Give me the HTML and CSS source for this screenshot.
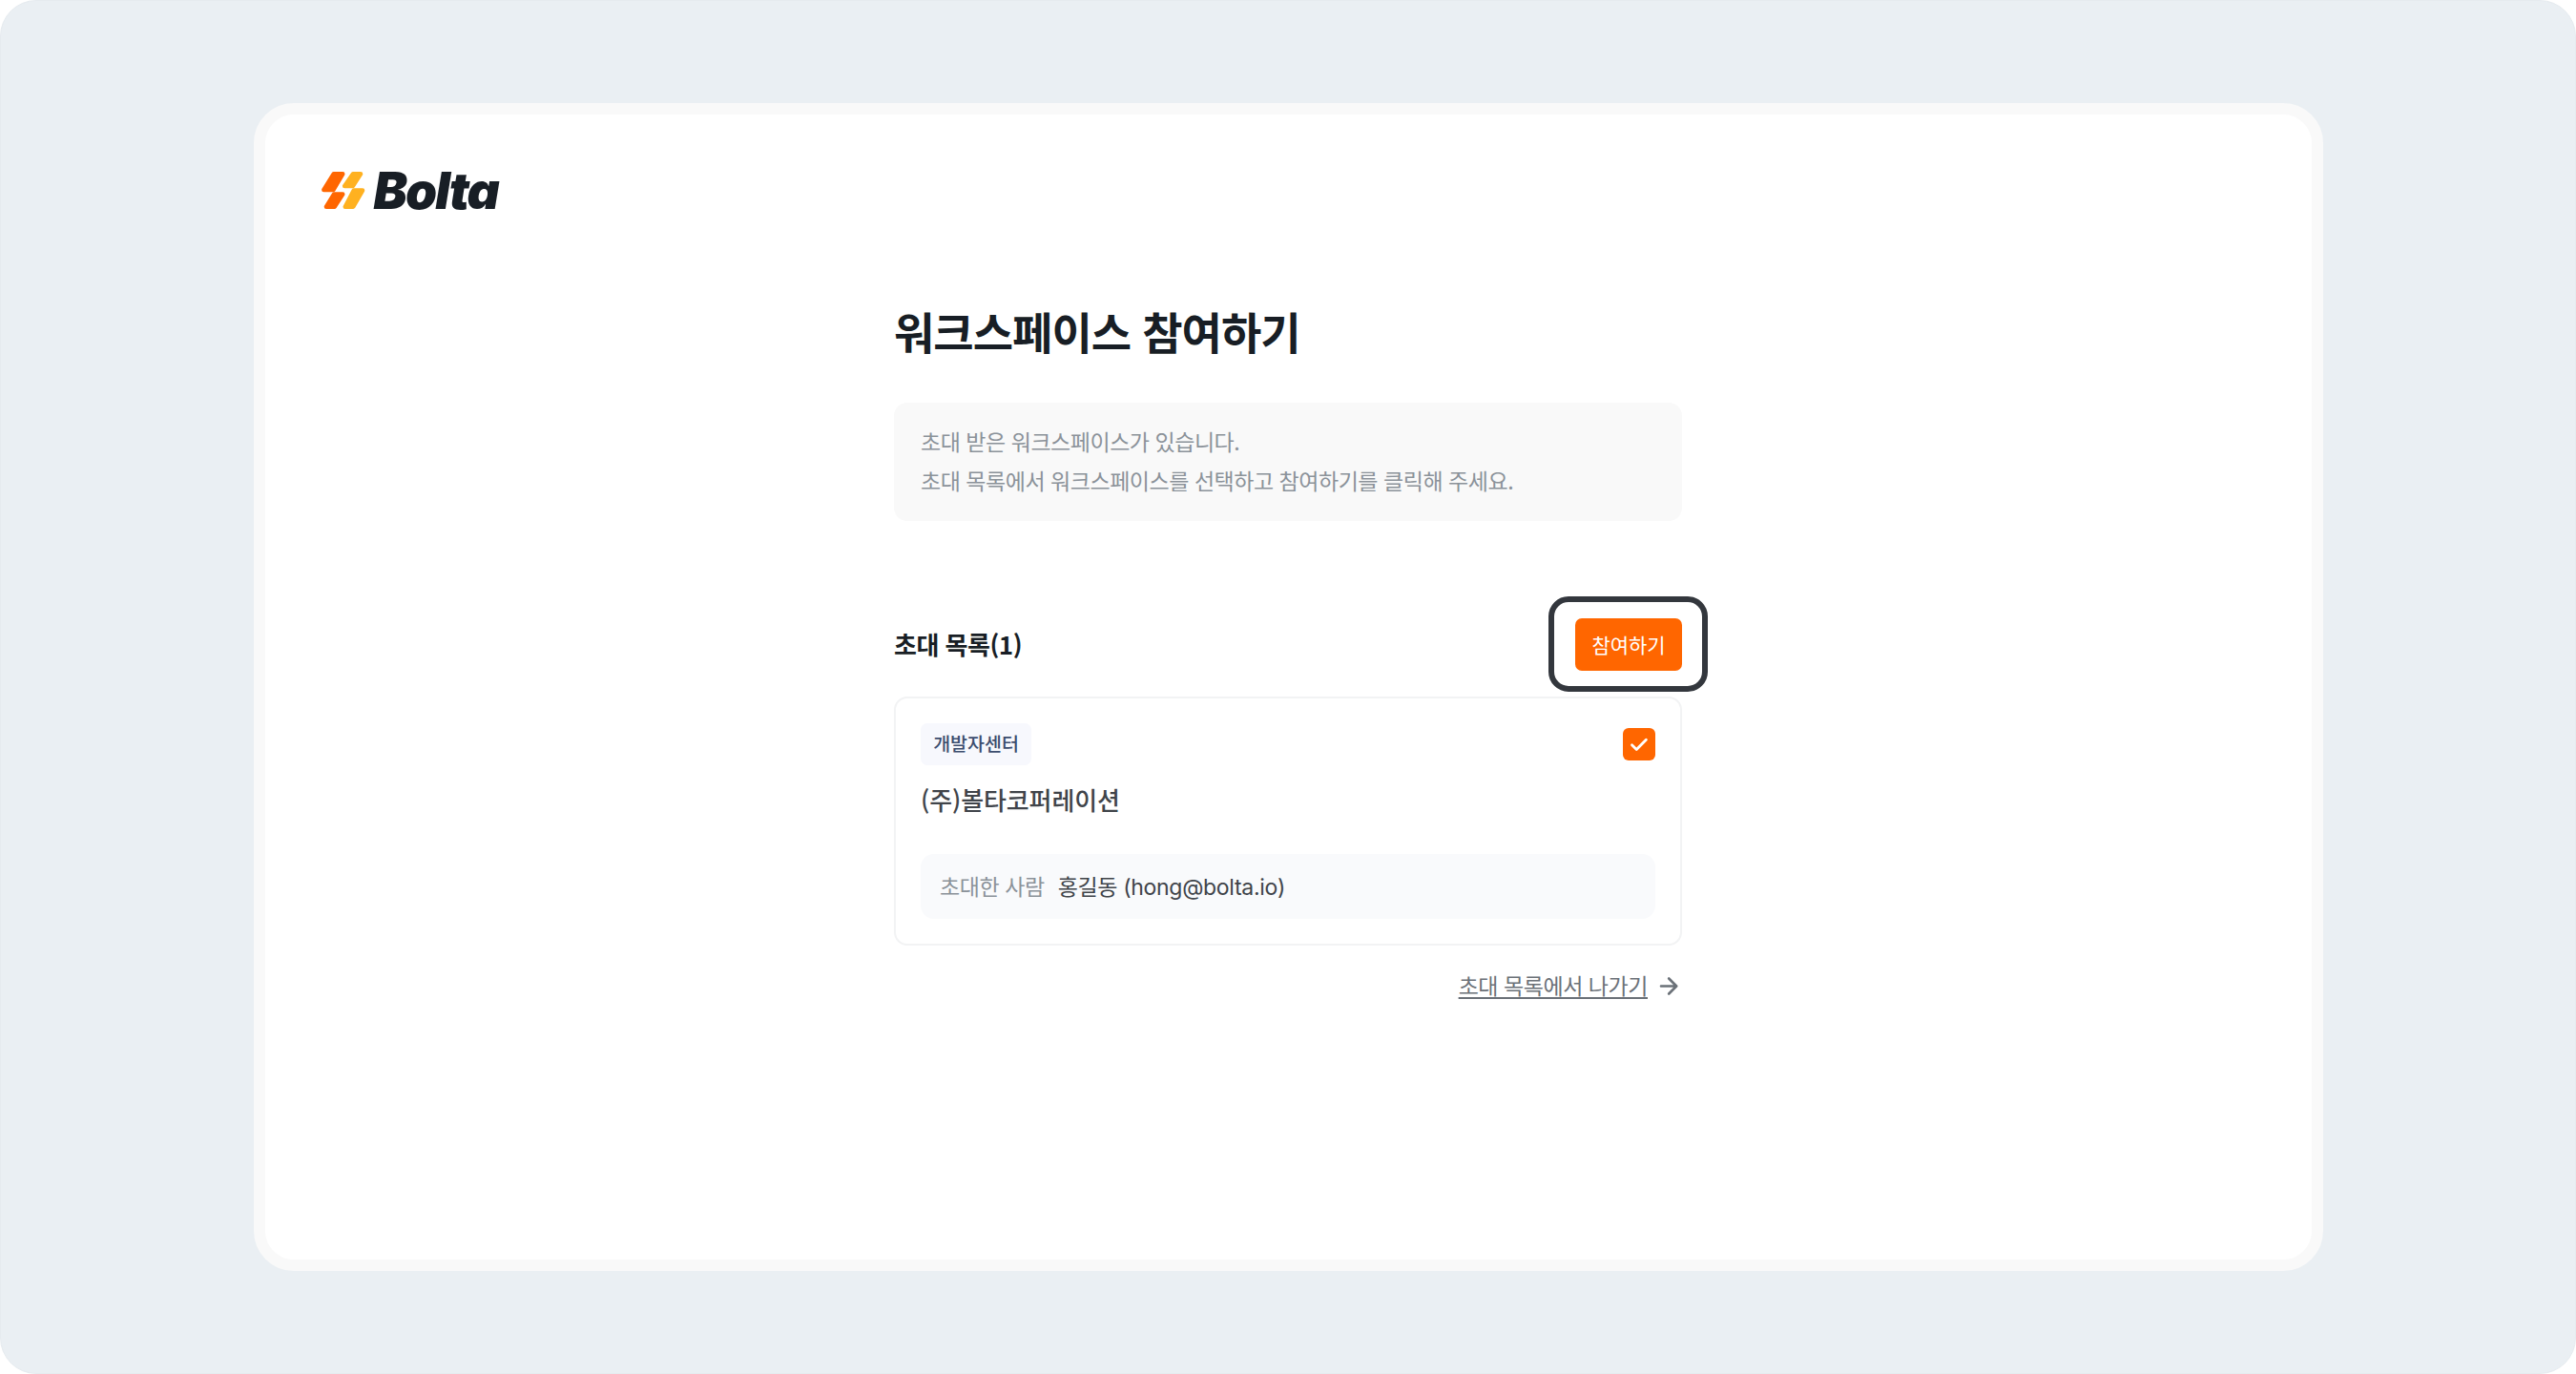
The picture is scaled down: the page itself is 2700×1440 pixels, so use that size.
FILE: index.html
```html
<!DOCTYPE html>
<html lang="ko">
<head>
  <meta charset="UTF-8" />
  <meta name="viewport" content="width=device-width, initial-scale=1.0"/>
  <title>Bolta | 워크스페이스 참여하기</title>
  <link rel="stylesheet" href="styles.css">
</head>
<body>

  <div class="page">
    <div class="window">

      <div class="logo">
        <svg class="logo-mark" width="46" height="40" viewBox="0 0 46 40">
          <g fill="#ff6600" stroke="#ff6600" stroke-width="4.6" stroke-linejoin="round">
            <path d="M12.8 2.3H22.2L12.3 19H2.4Z"/>
            <path d="M13 23.6H22.2L13.6 36.7H5Z"/>
          </g>
          <g fill="#ffb120" stroke="#ffb120" stroke-width="4.6" stroke-linejoin="round">
            <path d="M33 2.3H41L32.8 15H24.2Z"/>
            <path d="M33.8 19.6H43L33.2 36.7H24.8Z"/>
          </g>
        </svg>
        <span class="logo-text">Bolta</span>
      </div>

      <main class="content">
        <h1 class="title">워크스페이스 참여하기</h1>

        <div class="notice">
          <p>초대 받은 워크스페이스가 있습니다.</p>
          <p>초대 목록에서 워크스페이스를 선택하고 참여하기를 클릭해 주세요.</p>
        </div>

        <div class="list-header">
          <h2 class="list-title">초대 목록(1)</h2>
          <div class="join">
            <button class="join-btn" type="button">참여하기</button>
          </div>
        </div>

        <div class="invite">
          <div class="invite-top">
            <span class="badge">개발자센터</span>
            <span class="checkbox">
              <svg width="34" height="34" viewBox="0 0 34 34" fill="none" stroke="#fff" stroke-width="2.8" stroke-linecap="round" stroke-linejoin="round">
                <path d="M9.5 17.8L14.3 22.6L24.4 12.2"/>
              </svg>
            </span>
          </div>
          <div class="company">(주)볼타코퍼레이션</div>
          <div class="inviter">
            <span class="label">초대한 사람</span>
            <span class="value">홍길동 <span class="email">(hong@bolta.io)</span></span>
          </div>
        </div>

        <div class="leave">
          <a class="leave-link">초대 목록에서 나가기</a>
          <svg width="20" height="20" viewBox="0 0 20 20" fill="none" stroke="#6b7178" stroke-width="2.6" stroke-linecap="round" stroke-linejoin="round">
            <path d="M2 10.5H18M10.2 2.5L18.2 10.5L10.2 18.5"/>
          </svg>
        </div>
      </main>

    </div>
  </div>

</body>
</html>
```
FILE: styles.css
```css
* {
  box-sizing: border-box;
  margin: 0;
  padding: 0;
}

body {
  font-family: 'Noto Sans CJK KR', sans-serif;
  background: #fff;
  color: #181e25;
}

.page {
  width: 2700px;
  height: 1440px;
  background: #eaeff3;
  border: 1px solid #e6ebef;
  border-radius: 38px;
  padding: 107px 264.5px;
}

.window {
  height: 1224px;
  background: #fff;
  border: 12px solid #f9f9f9;
  border-radius: 42px;
  padding: 60px 59px;
}

.logo {
  display: flex;
  align-items: center;
  gap: 9px;
  height: 40px;
}

.logo-text {
  font-family: 'Inter', sans-serif;
  font-size: 53px;
  font-weight: 900;
  font-style: italic;
  font-feature-settings: "cv11";
  letter-spacing: -1.9px;
  line-height: 38px;
}

.content {
  width: 826px;
  margin: 91px auto 0;
}

.title {
  font-size: 46px;
  font-weight: 700;
  line-height: 70px;
  letter-spacing: -0.95px;
}

.notice {
  margin-top: 41px;
  padding: 20px 28px;
  height: 124px;
  background: #f9f9f9;
  border-radius: 14px;
  color: #8b9299;
  font-size: 23px;
  line-height: 41px;
  letter-spacing: -0.47px;
}

.list-header {
  display: flex;
  justify-content: space-between;
  align-items: center;
  height: 100px;
  margin-top: 79px;
}

.list-title {
  padding-bottom: 2px;
  font-size: 26px;
  font-weight: 700;
  letter-spacing: -0.5px;
}

.join {
  height: 100px;
  padding: 17px 21px 16px 22px;
  margin-right: -27px;
  border: 6px solid #33373d;
  border-radius: 21px;
}

.join-btn {
  display: block;
  width: 112px;
  height: 55px;
  padding-bottom: 2px;
  background: #ff6600;
  border: none;
  border-radius: 7px;
  color: #fff;
  font-family: inherit;
  font-size: 21px;
  font-weight: 400;
  letter-spacing: -0.1px;
}

.invite {
  height: 261px;
  margin-top: 5px;
  padding: 26px;
  border: 2px solid #f2f3f4;
  border-radius: 14px;
}

.invite-top {
  display: flex;
  justify-content: space-between;
  align-items: center;
}

.badge {
  width: 116px;
  height: 44px;
  background: #f7f8fd;
  border-radius: 7px;
  color: #3c4d6e;
  font-size: 19.5px;
  font-weight: 500;
  line-height: 42px;
  text-align: center;
}

.checkbox {
  width: 34px;
  height: 34px;
  background: #ff6600;
  border-radius: 6px;
}

.checkbox svg {
  display: block;
}

.company {
  margin-top: 16px;
  color: #40444a;
  font-size: 26px;
  font-weight: 500;
  line-height: 40px;
  letter-spacing: -0.1px;
}

.inviter {
  display: flex;
  gap: 14px;
  height: 68px;
  margin-top: 37px;
  padding: 0 20px;
  background: #f9fafc;
  border-radius: 14px;
  font-size: 23px;
  line-height: 66px;
  letter-spacing: -0.4px;
}

.label {
  color: #8b9299;
}

.value {
  color: #40444a;
}

.email {
  font-family: 'Inter', sans-serif;
  letter-spacing: -0.3px;
}

.leave {
  display: flex;
  justify-content: flex-end;
  align-items: center;
  gap: 12px;
  height: 40px;
  margin-top: 22px;
  padding-right: 4px;
}

.leave-link {
  padding-bottom: 2px;
  color: #6b7178;
  font-size: 23px;
  line-height: 32px;
  letter-spacing: -0.45px;
  text-decoration: underline;
  text-decoration-thickness: 2px;
  text-underline-offset: 3px;
}
```
